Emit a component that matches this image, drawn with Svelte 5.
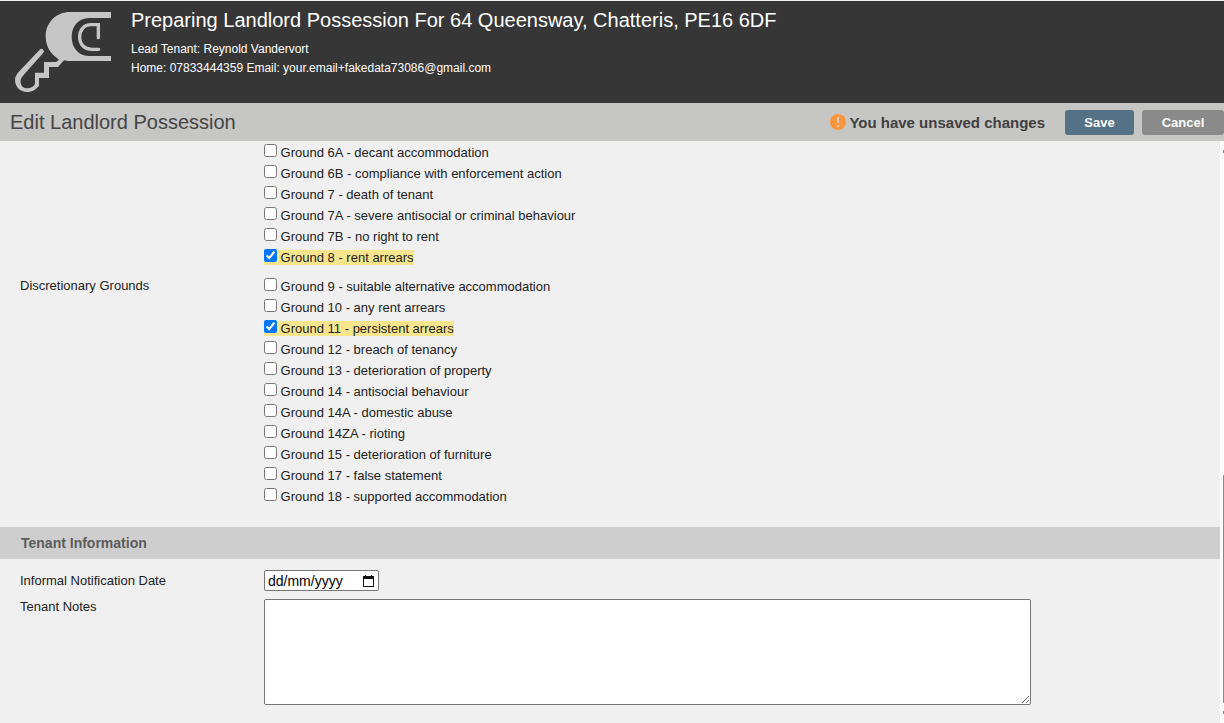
<script>
    const tenant = {
        name: 'Reynold Vandervort',
        phone: '07833444359',
        email: 'your.email+fakedata73086@gmail.com'
    };

    let groups = $state([
        {
            label: '',
            name: 'Mandatory Grounds',
            grounds: [
                { text: 'Ground 6A - decant accommodation', checked: false },
                { text: 'Ground 6B - compliance with enforcement action', checked: false },
                { text: 'Ground 7 - death of tenant', checked: false },
                { text: 'Ground 7A - severe antisocial or criminal behaviour', checked: false },
                { text: 'Ground 7B - no right to rent', checked: false },
                { text: 'Ground 8 - rent arrears', checked: true }
            ]
        },
        {
            label: 'Discretionary Grounds',
            name: 'Discretionary Grounds',
            grounds: [
                { text: 'Ground 9 - suitable alternative accommodation', checked: false },
                { text: 'Ground 10 - any rent arrears', checked: false },
                { text: 'Ground 11 - persistent arrears', checked: true },
                { text: 'Ground 12 - breach of tenancy', checked: false },
                { text: 'Ground 13 - deterioration of property', checked: false },
                { text: 'Ground 14 - antisocial behaviour', checked: false },
                { text: 'Ground 14A - domestic abuse', checked: false },
                { text: 'Ground 14ZA - rioting', checked: false },
                { text: 'Ground 15 - deterioration of furniture', checked: false },
                { text: 'Ground 17 - false statement', checked: false },
                { text: 'Ground 18 - supported accommodation', checked: false }
            ]
        }
    ]);

    let notificationDate = $state('');
    let notes = $state('');
</script>

<div class="page">
    <header>
        <svg class="logo" viewBox="42 33 294 246" aria-hidden="true">
            <path fill="#c6c6c6" d="M333 36H210C168 36 137 68 137 109C137 138 151 161 172 175L177 180L168 186H132V218H105V250C103 260 92 265 81 265C68 265 60 254 62 240C63 233 68 228 74 221L129 160A7 7 0 0 0 119 149L58 214C49 224 45 231 45 240C45 261 61 276 81 276C99 276 108 268 117 257V234H147V201H174L192 181L206 183H333V168H266C235 167 215 143 215 111C215 79 235 54 268 54H333Z" />
            <path fill="none" stroke="#c6c6c6" stroke-width="10" stroke-linecap="round" d="M295 113V74H273C251 74 239 91 239 110C239 132 252 148 276 148H296" />
        </svg>
        <div class="summary">
            <h1>Preparing Landlord Possession For 64 Queensway, Chatteris, PE16 6DF</h1>
            <p>Lead Tenant: {tenant.name}</p>
            <p>Home: {tenant.phone} Email: {tenant.email}</p>
        </div>
    </header>

    <div class="toolbar">
        <h2>Edit Landlord Possession</h2>
        <div class="unsaved">
            <svg width="16" height="16" viewBox="0 0 16 16" aria-hidden="true">
                <circle cx="8" cy="8" r="8" fill="#fb963c" />
                <path fill="#d5cdc2" d="M7 3h2v6H7zM7 11h2v2H7z" />
            </svg>
            You have unsaved changes
        </div>
        <button type="button" class="save">Save</button>
        <button type="button" class="cancel">Cancel</button>
    </div>

    <div class="body">
        <main>
            <div class="grounds">
                {#each groups as group}
                    <div class="row" role="group" aria-label={group.name}>
                        <span class="label">{group.label}</span>
                        <ul>
                            {#each group.grounds as ground}
                                <li>
                                    <label class:selected={ground.checked}>
                                        <input type="checkbox" bind:checked={ground.checked} /> {ground.text}
                                    </label>
                                </li>
                            {/each}
                        </ul>
                    </div>
                {/each}
            </div>

            <h3>Tenant Information</h3>
            <div class="fields">
                <div class="row middle">
                    <label class="label" for="notification-date">Informal Notification Date</label>
                    <div class="date">
                        <input id="notification-date" type="text" placeholder="dd/mm/yyyy" bind:value={notificationDate} />
                        <button type="button" aria-label="Choose date">
                            <svg width="11" height="12" viewBox="0 0 11 12" aria-hidden="true">
                                <path fill="#111" d="M0 1h2V0h1v1h5V0h1v1h2v11H0zM1 4v7h9V4z" fill-rule="evenodd" />
                            </svg>
                        </button>
                    </div>
                </div>
                <div class="row">
                    <label class="label" for="notes">Tenant Notes</label>
                    <textarea id="notes" bind:value={notes}></textarea>
                </div>
            </div>
        </main>
        <div class="scrollbar" aria-hidden="true">
            <span class="arrow"></span>
            <span class="track"></span>
            <span class="thumb"></span>
            <span class="arrow"></span>
        </div>
    </div>
</div>

<style>
    :global(body) {
        margin: 0;
        background: #f0f0f0;
    }
    .page {
        display: flex;
        flex-direction: column;
        min-height: 100vh;
        box-sizing: border-box;
        font-family: "Liberation Sans", Arial, sans-serif;
        font-size: 13px;
        color: #222;
    }
    h1, h2, h3, p, ul {
        margin: 0;
        padding: 0;
        font-weight: normal;
    }
    header {
        display: flex;
        align-items: flex-start;
        gap: 19px;
        min-height: 103px;
        box-sizing: border-box;
        padding: 7px 14px 0;
        border-top: 1px solid #f0f5f2;
        background: #363636;
        color: #fff;
    }
    .logo {
        width: 98px;
        height: 82px;
        margin-top: 3px;
        flex: none;
    }
    h1 {
        font-size: 20px;
        line-height: 24px;
        margin-bottom: 8px;
    }
    p {
        font-size: 12px;
        line-height: 19px;
    }
    .toolbar {
        display: flex;
        align-items: center;
        height: 38px;
        padding-left: 10px;
        background: #c6c6c4;
    }
    h2 {
        flex: 1;
        font-size: 20px;
        color: #444;
    }
    .unsaved {
        display: flex;
        align-items: center;
        gap: 3px;
        margin-right: 20px;
        font-size: 15px;
        font-weight: bold;
        color: #404040;
    }
    .toolbar button {
        height: 25px;
        padding: 0;
        border: 0;
        border-radius: 3px;
        font-family: inherit;
        font-size: 13px;
        font-weight: bold;
        color: #fff;
        cursor: pointer;
    }
    .toolbar .save {
        width: 69px;
        margin-right: 8px;
        background: #547186;
    }
    .toolbar .cancel {
        width: 82px;
        background: #8a8a8a;
    }
    .body {
        display: flex;
        flex: 1;
    }
    main {
        flex: 1;
    }
    .row {
        display: grid;
        grid-template-columns: 244px 1fr;
        padding-left: 20px;
    }
    .middle {
        align-items: center;
    }
    .grounds {
        display: flex;
        flex-direction: column;
        gap: 8px;
        padding: 1px 0 20px;
    }
    .grounds .row {
        line-height: 21px;
    }
    .grounds .label {
        line-height: 19px;
    }
    ul {
        list-style: none;
    }
    li label.selected {
        background: #f8e68e;
    }
    li input {
        width: 13px;
        height: 13px;
        margin: 0;
    }
    h3 {
        padding-left: 21px;
        background: #cecece;
        font-size: 14px;
        font-weight: bold;
        line-height: 32px;
        color: #5c5c5c;
    }
    .fields {
        display: flex;
        flex-direction: column;
        gap: 8px;
        padding-top: 11px;
    }
    .fields .label {
        line-height: 16px;
    }
    .date {
        display: flex;
        align-items: center;
        width: 115px;
        height: 21px;
        box-sizing: border-box;
        border: 1px solid #767676;
        border-radius: 2px;
        background: #fff;
    }
    .date input {
        flex: 1;
        min-width: 0;
        padding: 0 0 0 3px;
        border: 0;
        outline: 0;
        background: none;
        font-family: inherit;
        font-size: 14px;
        color: #000;
    }
    .date input::placeholder {
        color: #000;
    }
    .date button {
        display: flex;
        padding: 0 4px;
        border: 0;
        background: none;
    }
    textarea {
        width: 100%;
        max-width: 767px;
        height: 106px;
        box-sizing: border-box;
        border: 1px solid #767676;
        border-radius: 2px;
        background: #fff;
        font-family: inherit;
        font-size: 13px;
    }
    .scrollbar {
        display: flex;
        flex-direction: column;
        align-items: flex-end;
        width: 4px;
        box-sizing: border-box;
        padding: 9px 0;
        background: #fcfcfc;
    }
    .arrow {
        width: 1px;
        height: 3px;
        background: #8a8a8a;
    }
    .track {
        flex: 321;
    }
    .thumb {
        flex: 228;
        width: 1px;
        margin-bottom: 8px;
        background: #8a8a8a;
    }
</style>
